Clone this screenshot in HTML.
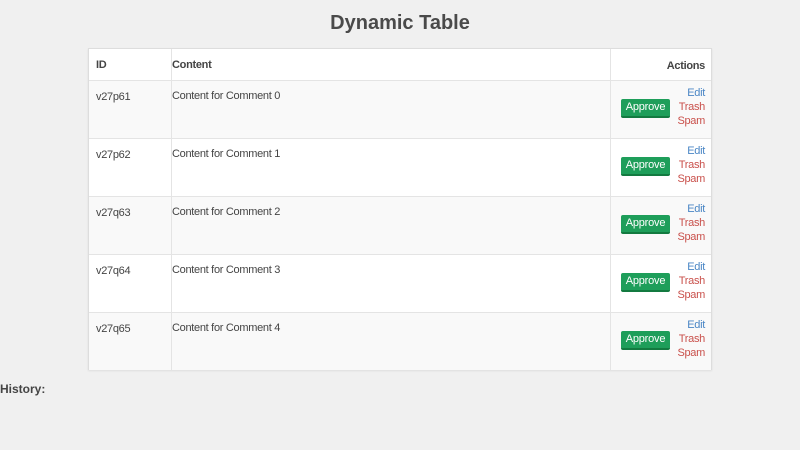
<!DOCTYPE html>
<html><head><style>
body{margin:0;background:#f0f0f0;font-family:"Liberation Sans",sans-serif;color:#444;width:800px;height:450px;position:relative;overflow:hidden}
h1{position:absolute;top:10px;left:0;width:800px;text-align:center;margin:0;font-size:20px;font-weight:bold;color:#4a4a4a;line-height:26px}
.tbl{position:absolute;left:88px;top:48px;width:622px;height:320px;border:1px solid #ddd;background:#fff;box-shadow:0 1px 2px rgba(0,0,0,0.08)}
.row{position:absolute;left:0;width:622px;border-top:1px solid #e4e4e4;font-size:11px;letter-spacing:-0.3px}
.c{position:absolute;top:0;bottom:0}
.c1{left:0;width:82px;border-right:1px solid #e4e4e4}
.c2{left:83px;width:438px;border-right:1px solid #e4e4e4}
.c3{left:522px;width:100px}
.t{position:absolute;left:7px}
.hdr{font-weight:bold}
.btn{position:absolute;left:10px;width:49px;height:17px;background:#1e9e5a;border-bottom:2px solid #137a40;border-radius:2px;color:#fff;font-size:11px;line-height:17px;text-align:center;letter-spacing:-0.2px}
.lk{position:absolute;right:6px;font-size:11px;line-height:14px;text-align:right}
.e{color:#4a86c5}.r{color:#c9504b}
.hist{position:absolute;left:0;top:382px;font-size:12px;font-weight:bold;color:#444}
</style></head><body>
<h1>Dynamic Table</h1>
<div class="tbl">
<div class="row hdr" style="top:0;height:31px;border-top:none">
<div class="c c1"><span class="t" style="top:10px">ID</span></div>
<div class="c c2"><span class="t" style="top:10px;left:0">Content</span></div>
<div class="c c3"><span class="lk" style="top:10px;color:#444">Actions</span></div>
</div>
<div class="row" style="top:31px;height:57px;background:#f9f9f9">
<div class="c c1"><span class="t" style="top:10px">v27p61</span></div>
<div class="c c2"><span class="t" style="top:9px;left:0">Content for Comment 0</span></div>
<div class="c c3"><div class="btn" style="top:18px">Approve</div><div class="lk" style="top:5px"><span class="e">Edit</span><br><span class="r">Trash</span><br><span class="r">Spam</span></div></div>
</div>
<div class="row" style="top:89px;height:57px;background:#fff">
<div class="c c1"><span class="t" style="top:10px">v27p62</span></div>
<div class="c c2"><span class="t" style="top:9px;left:0">Content for Comment 1</span></div>
<div class="c c3"><div class="btn" style="top:18px">Approve</div><div class="lk" style="top:5px"><span class="e">Edit</span><br><span class="r">Trash</span><br><span class="r">Spam</span></div></div>
</div>
<div class="row" style="top:147px;height:57px;background:#f9f9f9">
<div class="c c1"><span class="t" style="top:10px">v27q63</span></div>
<div class="c c2"><span class="t" style="top:9px;left:0">Content for Comment 2</span></div>
<div class="c c3"><div class="btn" style="top:18px">Approve</div><div class="lk" style="top:5px"><span class="e">Edit</span><br><span class="r">Trash</span><br><span class="r">Spam</span></div></div>
</div>
<div class="row" style="top:205px;height:57px;background:#fff">
<div class="c c1"><span class="t" style="top:10px">v27q64</span></div>
<div class="c c2"><span class="t" style="top:9px;left:0">Content for Comment 3</span></div>
<div class="c c3"><div class="btn" style="top:18px">Approve</div><div class="lk" style="top:5px"><span class="e">Edit</span><br><span class="r">Trash</span><br><span class="r">Spam</span></div></div>
</div>
<div class="row" style="top:263px;height:57px;background:#f9f9f9">
<div class="c c1"><span class="t" style="top:10px">v27q65</span></div>
<div class="c c2"><span class="t" style="top:9px;left:0">Content for Comment 4</span></div>
<div class="c c3"><div class="btn" style="top:18px">Approve</div><div class="lk" style="top:5px"><span class="e">Edit</span><br><span class="r">Trash</span><br><span class="r">Spam</span></div></div>
</div>
</div>
<div class="hist">History:</div>
</body></html>
